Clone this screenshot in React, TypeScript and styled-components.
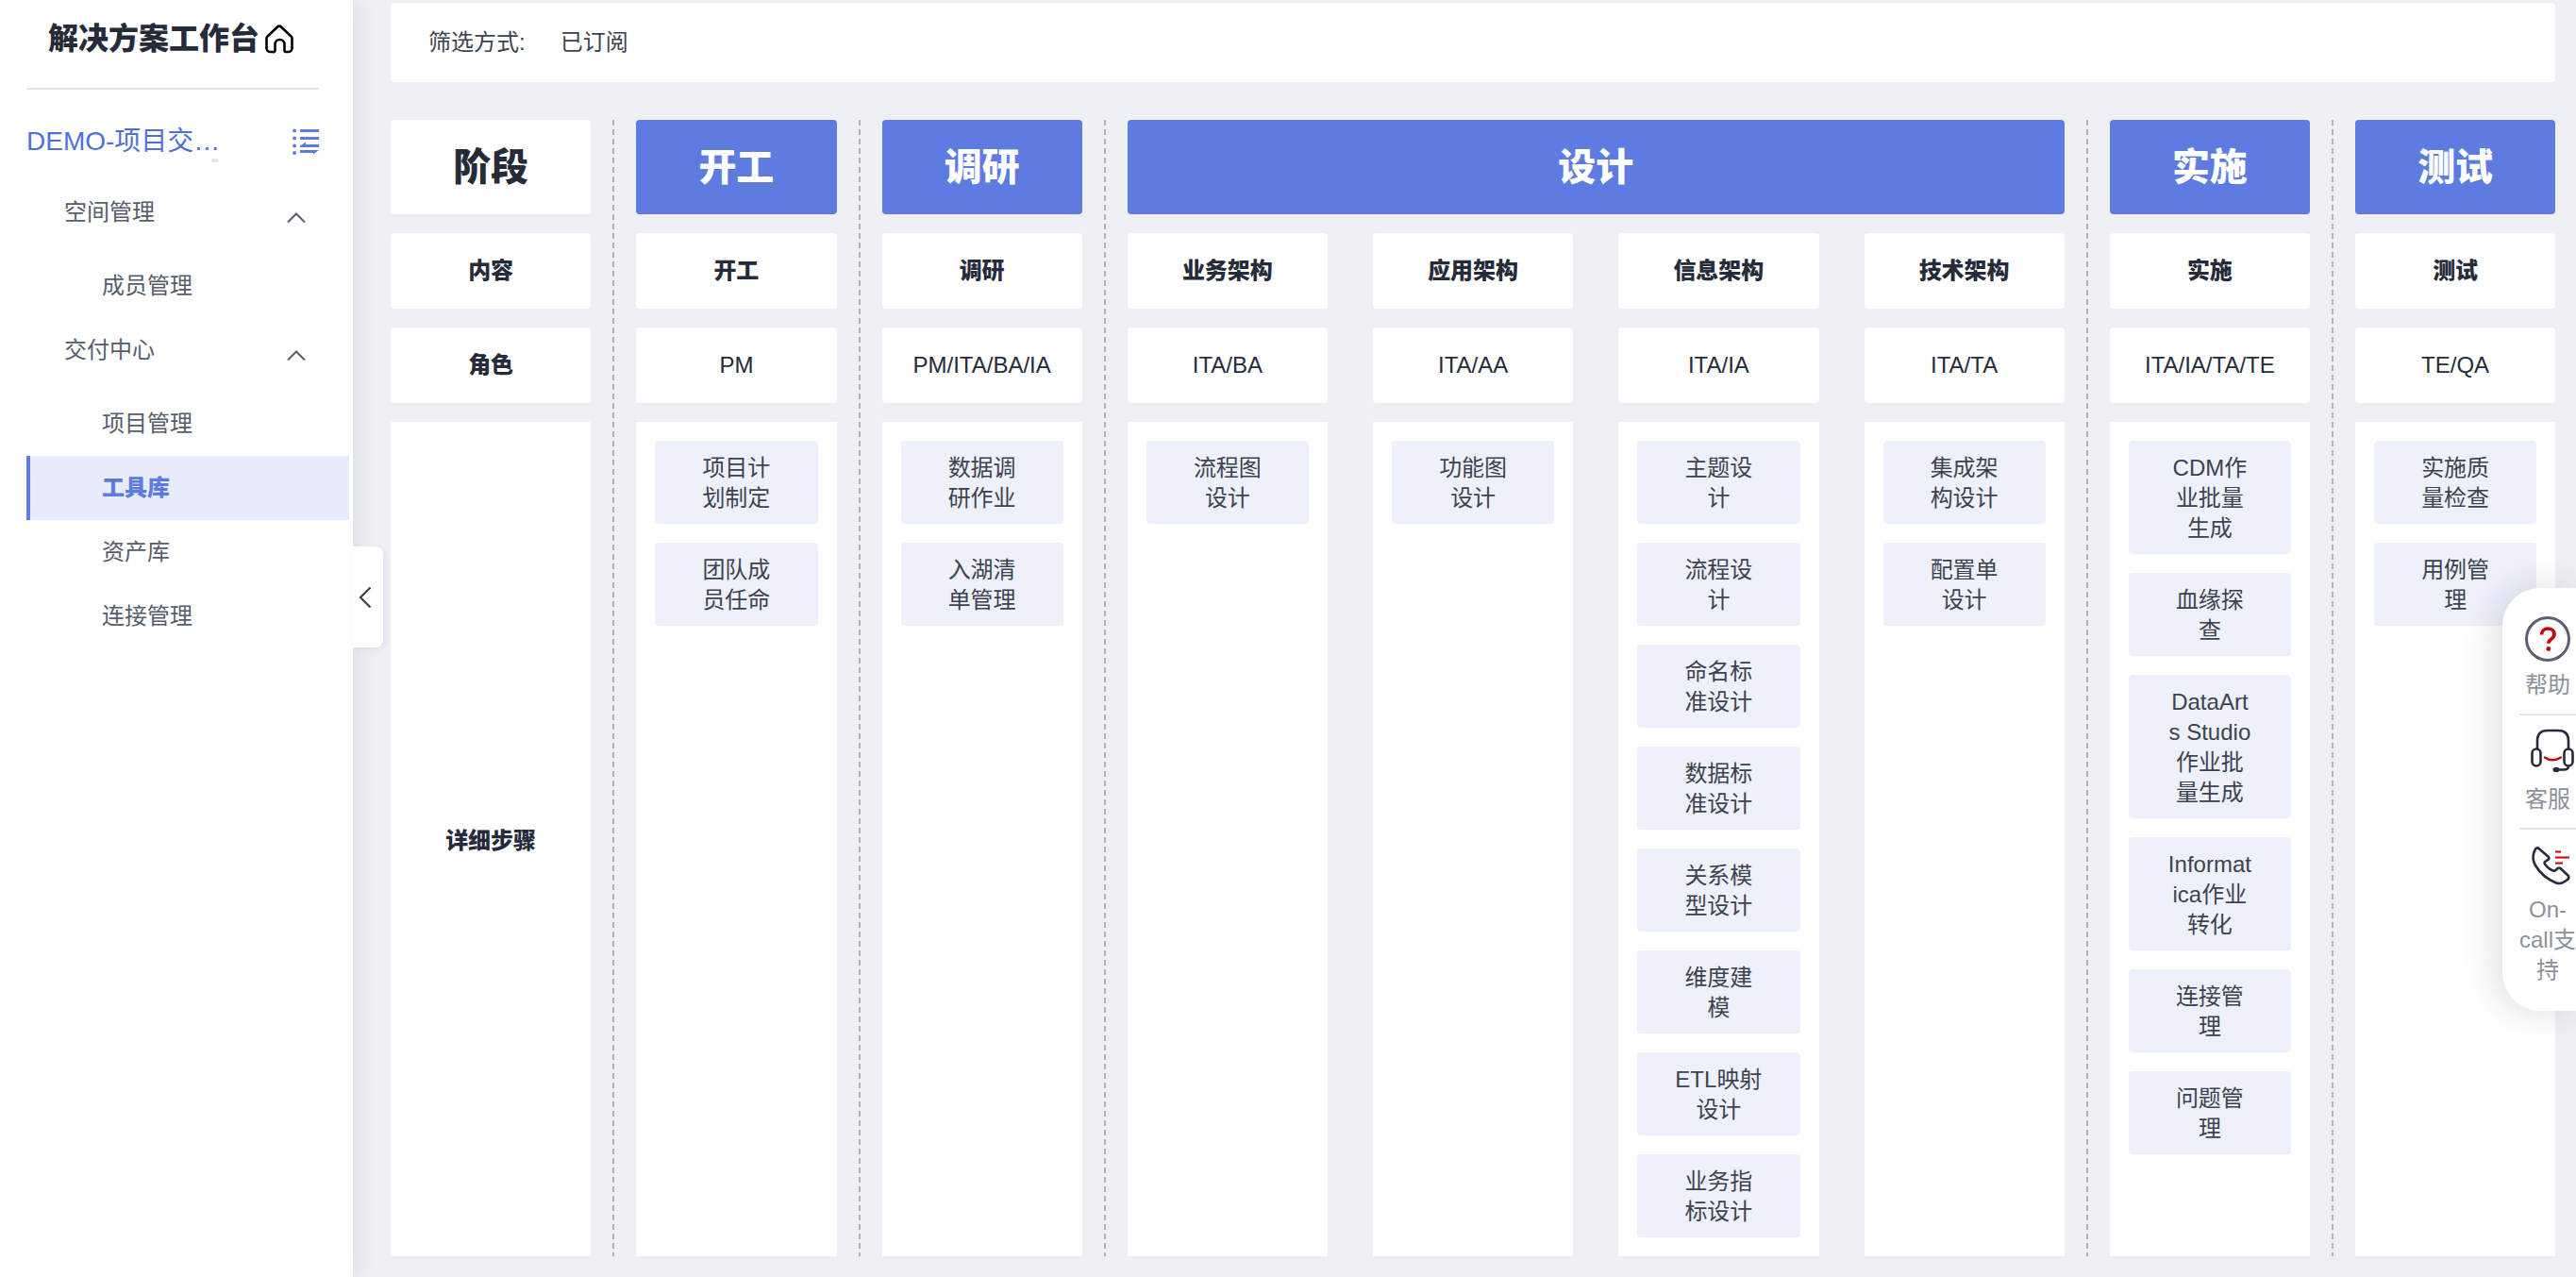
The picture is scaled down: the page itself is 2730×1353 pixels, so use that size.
import React from "react";
import styled, { createGlobalStyle } from "styled-components";

const GlobalStyle = createGlobalStyle`
  html, body { margin: 0; padding: 0; height: 100%; background: #eef0f5; }
  body { font-family: "Liberation Sans", "Noto Sans CJK SC", sans-serif; color: #252b3a; overflow: hidden; }
  #root { height: 100%; }
  * { box-sizing: border-box; }
`;

const Page = styled.div`
  display: flex;
  height: 1353px;
  width: 2730px;
  overflow: hidden;
  position: relative;
`;

const Sidebar = styled.aside`
  flex: 0 0 374px;
  background: #fff;
  padding-left: 28px;
  position: relative;
  z-index: 2;
  box-shadow: 0 0 22px rgba(90, 96, 120, 0.16);
`;

const TitleRow = styled.div`
  width: 310px;
  height: 95px;
  padding: 0 0 12px 23px;
  display: flex;
  align-items: center;
  gap: 6px;
  border-bottom: 2px solid #e3e4ea;
`;

const Title = styled.h1`
  margin: 0;
  font-size: 32px;
  line-height: 44px;
  font-weight: 900;
  color: #252b3a;
  white-space: nowrap;
`;

const ProjectRow = styled.div`
  width: 310px;
  height: 56px;
  margin-top: 27px;
  display: flex;
  align-items: center;
  justify-content: space-between;
  position: relative;
`;

const ProjectName = styled.span`
  width: 207px;
  font-size: 28px;
  line-height: 40px;
  color: #4f6fdc;
  white-space: nowrap;
  overflow: hidden;
  text-overflow: ellipsis;
`;

const Speck = styled.i`
  position: absolute;
  left: 196px;
  top: 46px;
  width: 7px;
  height: 4px;
  background: #e4e5e9;
  border-radius: 2px;
`;

const Nav = styled.nav`
  width: 342px;
  margin-top: 13px;
  font-size: 24px;
  line-height: 32px;
  color: #575d6c;
`;

const GroupRow = styled.div`
  height: 68px;
  padding: 0 46px 0 40px;
  display: flex;
  align-items: center;
  justify-content: space-between;
  svg { margin-top: 10px; }
`;

const ChildList = styled.div`
  padding-top: 10px;
`;

const ChildRow = styled.div<{ $active?: boolean }>`
  height: 68px;
  display: flex;
  align-items: center;
  padding-left: ${(p) => (p.$active ? "76px" : "80px")};
  border-left: ${(p) => (p.$active ? "4px solid #5e7ce0" : "none")};
  background: ${(p) => (p.$active ? "#e8ebf9" : "transparent")};
  color: ${(p) => (p.$active ? "#5e7ce0" : "inherit")};
  font-weight: ${(p) => (p.$active ? 900 : 400)};
`;

const CollapseTab = styled.button`
  position: absolute;
  left: 100%;
  top: 579px;
  width: 32px;
  height: 107px;
  padding: 0 0 0 6px;
  border: none;
  background: #fff;
  border-radius: 0 8px 8px 0;
  box-shadow: 2px 2px 6px rgba(90, 96, 120, 0.1);
  display: flex;
  align-items: center;
`;

const Main = styled.main`
  flex: 1;
  min-width: 0;
  padding: 3px 22px 22px 40px;
  display: flex;
  flex-direction: column;
`;

const FilterBar = styled.div`
  flex: 0 0 84px;
  margin-bottom: 40px;
  padding-left: 40px;
  background: #fff;
  border-radius: 4px;
  display: flex;
  align-items: center;
  gap: 37px;
  font-size: 24px;
  line-height: 32px;
  color: #3d4251;
`;

const FilterLabel = styled.span``;

const FilterValue = styled.span``;

const Board = styled.div`
  flex: 1;
  display: flex;
  min-height: 0;
`;

const Stage = styled.section<{ $cols: number }>`
  flex: ${(p) => p.$cols} ${(p) => p.$cols} 0;
  flex-basis: calc(${(p) => p.$cols} * 212.25px + ${(p) => p.$cols - 1} * 48px);
  display: grid;
  grid-template-columns: repeat(${(p) => p.$cols}, 212.25px);
  grid-template-rows: 100px 80px 80px 1fr;
  column-gap: 48px;
  row-gap: 20px;
`;

const StageDivider = styled.div`
  flex: 0 0 48px;
  display: flex;
  justify-content: center;
  &::before {
    content: "";
    width: 2px;
    background: repeating-linear-gradient(to bottom, #b0b2bb 0 6px, transparent 6px 10px);
  }
`;

const StageHead = styled.div<{ $cols: number; $filled: boolean }>`
  grid-column: 1 / span ${(p) => p.$cols};
  display: flex;
  align-items: center;
  justify-content: center;
  border-radius: 4px;
  font-size: 40px;
  line-height: 56px;
  font-weight: 900;
  background: ${(p) => (p.$filled ? "#5e7ce0" : "#fff")};
  color: ${(p) => (p.$filled ? "#fff" : "#252b3a")};
`;

const Cell = styled.div<{ $bold?: boolean }>`
  display: flex;
  align-items: center;
  justify-content: center;
  background: #fff;
  border-radius: 4px;
  font-size: 24px;
  line-height: 32px;
  font-weight: ${(p) => (p.$bold ? 900 : 400)};
  color: #252b3a;
`;

const StepsLabel = styled(Cell)`
  border-radius: 0;
  padding-top: 3px;
`;

const Steps = styled.div`
  background: #fff;
  padding: 20px;
  display: flex;
  flex-direction: column;
  gap: 20px;
`;

const Step = styled.div`
  padding: 13px 40px 11px;
  background: #eef0fc;
  border-radius: 4px;
  font-size: 24px;
  line-height: 32px;
  text-align: center;
  word-break: break-all;
  color: #3d4251;
`;

const SupportPanel = styled.aside`
  position: absolute;
  top: 623px;
  right: 0;
  width: 78px;
  height: 448px;
  padding: 30px 0 0 18px;
  background: #fff;
  border-radius: 40px 0 0 40px;
  box-shadow: -6px 0 36px rgba(40, 44, 60, 0.16);
  z-index: 3;
`;

const SupportItem = styled.div`
  padding-bottom: 14px;
  & + & {
    border-top: 2px solid #e3e4ea;
    padding-top: 16px;
  }
`;

const SupportIcon = styled.div<{ $gap: number }>`
  width: 60px;
  height: 48px;
  display: flex;
  align-items: center;
  justify-content: center;
  margin-bottom: ${(p) => p.$gap}px;
`;

const SupportText = styled.div`
  font-size: 24px;
  line-height: 32px;
  text-align: center;
  color: #8d919c;
  word-break: normal;
`;

const HomeIcon = () => (
  <svg width="30" height="32" viewBox="0 0 30 32" fill="none" stroke="#000" strokeWidth="2.6" strokeLinejoin="round" strokeLinecap="round">
    <path d="M2.5 13.5 13 3.5a3 3 0 0 1 4 0l10.5 10a3 3 0 0 1 1 2.2V26a4 4 0 0 1-4 4h-2.5a1.5 1.5 0 0 1-1.5-1.5V22a5 5 0 0 0-10 0v6.5A1.5 1.5 0 0 1 8.5 30H5.5a4 4 0 0 1-4-4V15.7a3 3 0 0 1 1-2.2Z" />
  </svg>
);

const ListIcon = () => (
  <svg width="28" height="28" viewBox="0 0 28 28" fill="#5e7ce0" stroke="none">
    <circle cx="2" cy="2.5" r="2" />
    <circle cx="2" cy="10.5" r="2" />
    <circle cx="2" cy="18.5" r="2" />
    <circle cx="2" cy="26" r="2" />
    <rect x="8" y="1" width="20" height="3" />
    <rect x="8" y="9" width="20" height="3" />
    <path d="M8 18.5 14 14.5V17H28V20H8Z" />
    <path d="M8 23H28L22 27.5V26H8Z" />
  </svg>
);

const ChevronUp = () => (
  <svg width="20" height="13" viewBox="0 0 20 13" fill="none" stroke="#575d6c" strokeWidth="2">
    <path d="M1 11.5 10 2.5 19 11.5" />
  </svg>
);

const ChevronLeft = () => (
  <svg width="14" height="24" viewBox="0 0 14 24" fill="none" stroke="#3b3f4c" strokeWidth="2.2">
    <path d="M12.5 1.5 2 12l10.5 10.5" />
  </svg>
);

const HelpIcon = () => (
  <svg width="48" height="48" viewBox="0 0 48 48" fill="none">
    <circle cx="24" cy="24" r="22.5" stroke="#5a6070" strokeWidth="3" />
    <path d="M17.5 19.5c0-4 3-6.500 6.800-6.500 3.900 0 6.700 2.400 6.700 5.800 0 2.600-1.400 4-3.400 5.400-1.900 1.300-2.800 2.300-2.800 4.600" stroke="#c7000b" strokeWidth="3.6" />
    <circle cx="24.8" cy="34.5" r="2.4" fill="#c7000b" />
  </svg>
);

const HeadsetIcon = () => (
  <svg width="70" height="70" viewBox="0 0 70 70" fill="none" strokeLinecap="round" style={{ margin: "-11px" }}>
    <g stroke="#252b3a" strokeWidth="2.6">
      <path d="M24 30V22Q24 11 35 11H46Q57 11 57 22V30" />
      <rect x="18.5" y="30.5" width="9" height="18" rx="4.5" />
      <rect x="52.5" y="30.5" width="9" height="18" rx="4.5" />
      <path d="M57 49Q57 52.5 52 52.5H45" />
    </g>
    <path d="M43 52.5H45" stroke="#252b3a" strokeWidth="5" />
    <path d="M32 39.5Q40 45 49 39.5" stroke="#c7000b" strokeWidth="2.4" />
  </svg>
);

const PhoneIcon = () => (
  <svg width="70" height="70" viewBox="0 0 70 70" fill="none" style={{ margin: "-11px" }}>
    <path
      d="M25 14.5 36 24Q37 26 35 27L32 29Q31 30 32 31.5 36 37 41 38.5 43 39 44 37.5L45.5 36Q47 35 48.5 36L57 44Q58 46 56 48L53 50Q49 53 44 51.5 30 46 22 33 18 26 20.5 19L22 15.5Q23.5 14 25 14.5Z"
      stroke="#252b3a"
      strokeWidth="2.6"
      strokeLinejoin="round"
    />
    <path d="M43 18.5H49M43 24.5H58M43 30.5H51" stroke="#c7000b" strokeWidth="2.2" />
  </svg>
);

type Column = { title: string; role: string; steps: string[] };
type StageData = { name: string; columns: Column[] };

const stages: StageData[] = [
  { name: "开工", columns: [{ title: "开工", role: "PM", steps: ["项目计划制定", "团队成员任命"] }] },
  { name: "调研", columns: [{ title: "调研", role: "PM/ITA/BA/IA", steps: ["数据调研作业", "入湖清单管理"] }] },
  {
    name: "设计",
    columns: [
      { title: "业务架构", role: "ITA/BA", steps: ["流程图设计"] },
      { title: "应用架构", role: "ITA/AA", steps: ["功能图设计"] },
      {
        title: "信息架构",
        role: "ITA/IA",
        steps: ["主题设计", "流程设计", "命名标准设计", "数据标准设计", "关系模型设计", "维度建模", "ETL映射设计", "业务指标设计"],
      },
      { title: "技术架构", role: "ITA/TA", steps: ["集成架构设计", "配置单设计"] },
    ],
  },
  {
    name: "实施",
    columns: [
      {
        title: "实施",
        role: "ITA/IA/TA/TE",
        steps: ["CDM作业批量生成", "血缘探查", "DataArts Studio作业批量生成", "Informatica作业转化", "连接管理", "问题管理"],
      },
    ],
  },
  { name: "测试", columns: [{ title: "测试", role: "TE/QA", steps: ["实施质量检查", "用例管理"] }] },
];

const navGroups = [
  { name: "空间管理", children: ["成员管理"] },
  { name: "交付中心", children: ["项目管理", "工具库", "资产库", "连接管理"] },
];

export default function App() {
  return (
    <Page>
      <GlobalStyle />
      <Sidebar>
        <TitleRow>
          <Title>解决方案工作台</Title>
          <HomeIcon />
        </TitleRow>
        <ProjectRow>
          <ProjectName>DEMO-项目交付空间</ProjectName>
          <ListIcon />
          <Speck />
        </ProjectRow>
        <Nav>
          {navGroups.map((group) => (
            <div key={group.name}>
              <GroupRow>
                {group.name}
                <ChevronUp />
              </GroupRow>
              <ChildList>
                {group.children.map((child) => (
                  <ChildRow key={child} $active={child === "工具库"}>
                    {child}
                  </ChildRow>
                ))}
              </ChildList>
            </div>
          ))}
        </Nav>
        <CollapseTab aria-label="收起">
          <ChevronLeft />
        </CollapseTab>
      </Sidebar>
      <Main>
        <FilterBar>
          <FilterLabel>筛选方式:</FilterLabel>
          <FilterValue>已订阅</FilterValue>
        </FilterBar>
        <Board>
          <Stage $cols={1}>
            <StageHead $cols={1} $filled={false}>阶段</StageHead>
            <Cell $bold>内容</Cell>
            <Cell $bold>角色</Cell>
            <StepsLabel $bold>详细步骤</StepsLabel>
          </Stage>
          {stages.map((stage) => (
            <React.Fragment key={stage.name}>
              <StageDivider />
              <Stage $cols={stage.columns.length}>
                <StageHead $cols={stage.columns.length} $filled>{stage.name}</StageHead>
                {stage.columns.map((c) => (
                  <Cell key={c.title} $bold>{c.title}</Cell>
                ))}
                {stage.columns.map((c) => (
                  <Cell key={c.title}>{c.role}</Cell>
                ))}
                {stage.columns.map((c) => (
                  <Steps key={c.title}>
                    {c.steps.map((s) => (
                      <Step key={s}>{s}</Step>
                    ))}
                  </Steps>
                ))}
              </Stage>
            </React.Fragment>
          ))}
        </Board>
      </Main>
      <SupportPanel>
        <SupportItem>
          <SupportIcon $gap={9}><HelpIcon /></SupportIcon>
          <SupportText>帮助</SupportText>
        </SupportItem>
        <SupportItem>
          <SupportIcon $gap={9}><HeadsetIcon /></SupportIcon>
          <SupportText>客服</SupportText>
        </SupportItem>
        <SupportItem>
          <SupportIcon $gap={5}><PhoneIcon /></SupportIcon>
          <SupportText>On-call支持</SupportText>
        </SupportItem>
      </SupportPanel>
    </Page>
  );
}
